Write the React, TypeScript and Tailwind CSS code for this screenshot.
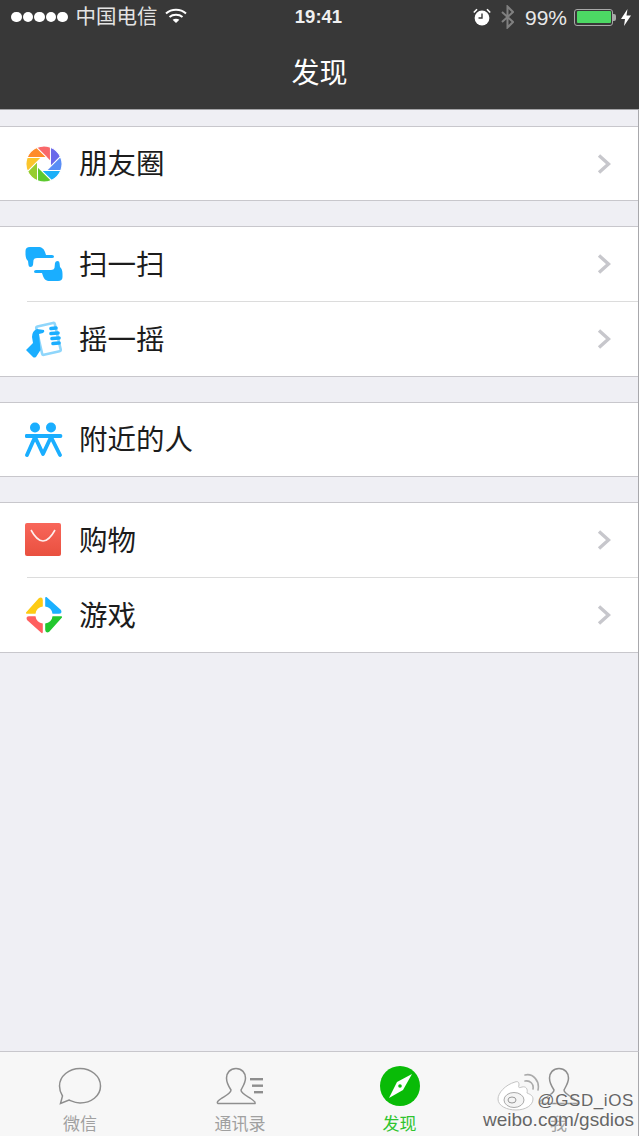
import type { ReactNode } from "react";

const cjk = "font-['Liberation_Sans','Noto_Sans_CJK_SC',sans-serif]";

function Chevron() {
  return (
    <svg width="14" height="20" viewBox="0 0 14 20" fill="none" className="shrink-0">
      <polyline points="2,1.5 11.5,10 2,18.5" stroke="#c7c7cc" strokeWidth="3.4" />
    </svg>
  );
}

function MomentsIcon() {
  const colors = ["#f9686a", "#6a68ea", "#5a8df5", "#1cb0f8", "#5cc92e", "#96cd2e", "#fbc52c", "#ff8b2b"];
  return (
    <svg width="38" height="38" viewBox="-19 -19 38 38">
      {colors.map((c, i) => (
        <path
          key={c}
          transform={`rotate(${i * 45 - 24})`}
          d="M0 -18A18 18 0 0 1 12.73 -12.73L7.04 0.18Z"
          fill={c}
          stroke="#fff"
          strokeWidth="1"
          strokeLinejoin="round"
        />
      ))}
    </svg>
  );
}

function ScanIcon() {
  const d = "M5 1H13C17 1 19 3 20 6L21 9H27Q29 9 29 10.5Q29 12 27 12H12Q9 12 8.5 14L8 19Q7.5 21 5.5 21Q3.5 21 3.5 19L3 15Q0.5 13 0.5 8V5Q0.5 1 5 1Z";
  return (
    <svg width="38" height="36" viewBox="0 0 38 36" fill="#1aaeff">
      <path d={d} />
      <path d={d} transform="rotate(180 19 18)" />
    </svg>
  );
}

function ShakeIcon() {
  return (
    <svg width="38" height="38" viewBox="0 0 38 38">
      <rect x="14" y="4.5" width="19" height="29" rx="1.5" transform="rotate(-13 23 19)" fill="none" stroke="#8fd6fb" strokeWidth="2.6" />
      <g stroke="#1aaeff" strokeWidth="3.6" strokeLinecap="round">
        <line x1="26" y1="8.5" x2="31" y2="8" />
        <line x1="26" y1="13.5" x2="33" y2="13" />
        <line x1="27" y1="18.5" x2="34" y2="18" />
        <line x1="28" y1="23.5" x2="34" y2="23" />
      </g>
      <path d="M1 30L8 23L7 17Q7 11 12 9L19 10Q20 12 18 13L14 14L15.5 30L11 37Q9 38 8 37Z" fill="#1aaeff" />
    </svg>
  );
}

function NearbyIcon() {
  return (
    <svg width="38" height="38" viewBox="0 0 38 38" fill="none">
      <circle cx="10" cy="6.5" r="5" fill="#1aaeff" />
      <circle cx="26" cy="6.5" r="5" fill="#1aaeff" />
      <g stroke="#1aaeff" strokeWidth="3.8" strokeLinecap="round" strokeLinejoin="round">
        <line x1="1.5" y1="15" x2="35.5" y2="15" />
        <polyline points="2,34 10,16 18,33 26,16 35,34" />
      </g>
    </svg>
  );
}

function ShopIcon() {
  return (
    <svg width="36" height="33" viewBox="0 0 36 33" className="mb-[2px]">
      <defs>
        <linearGradient id="shop" x1="0" y1="0" x2="0" y2="1">
          <stop offset="0" stopColor="#f8665a" />
          <stop offset="1" stopColor="#e9503f" />
        </linearGradient>
      </defs>
      <rect width="36" height="33" rx="2" fill="url(#shop)" />
      <path d="M6 7Q18 29 30 7" fill="none" stroke="#fff" strokeWidth="1.6" opacity="0.9" />
    </svg>
  );
}

function GameIcon() {
  const blades = [
    { color: "#fdcb13", angle: 0 },
    { color: "#1ab0ff", angle: 90 },
    { color: "#22c72e", angle: 180 },
    { color: "#ff5f5f", angle: 270 },
  ];
  return (
    <svg width="38" height="38" viewBox="-19 -19 38 38">
      {blades.map((b) => (
        <path
          key={b.color}
          transform={`rotate(${b.angle})`}
          d="M-18 -2.5L-5 -17Q-1.5 -18.5 -1.2 -15V-8.5A8 8 0 0 0 -8.5 -1.2H-17Q-18.5 -1.2 -18 -2.5Z"
          fill={b.color}
        />
      ))}
    </svg>
  );
}

function ChatIcon() {
  return (
    <svg width="44" height="38" viewBox="0 0 44 38" fill="none">
      <path
        d="M22 1.5C33 1.5 42.5 9 42.5 19C42.5 29 33 36 22 36C17 36 13.5 34 11 33L2.5 36.5L4.5 29C2.5 26 1.5 22.5 1.5 19C1.5 9 11 1.5 22 1.5Z"
        stroke="#8e8e8e"
        strokeWidth="1.5"
      />
    </svg>
  );
}

function ContactsIcon() {
  return (
    <svg width="48" height="38" viewBox="0 0 48 38" fill="none">
      <path
        d="M20 1.5C26 1.5 29.5 6 29.5 11C29.5 16 26.5 20 25 23C25 26 29 28 34 31C37 33 40 35 39 36.5H2C0 35 3 33 6 31C11 28 15 26 15 23C13 20 10.5 16 10.5 11C10.5 6 14 1.5 20 1.5Z"
        stroke="#8e8e8e"
        strokeWidth="1.5"
      />
      <g fill="#8e8e8e">
        <rect x="34" y="11" width="13" height="2.4" />
        <rect x="36" y="17.5" width="11" height="2.4" />
        <rect x="38" y="24" width="9" height="2.4" />
      </g>
    </svg>
  );
}

function DiscoverIcon() {
  return (
    <svg width="40" height="40" viewBox="0 0 40 40">
      <circle cx="20" cy="20" r="20" fill="#09bb07" />
      <path d="M32 8L23 24L9 32L17 16Z" fill="#fff" />
      <circle cx="20" cy="20" r="1.8" fill="#09bb07" />
    </svg>
  );
}

function MeIcon() {
  return (
    <svg width="44" height="38" viewBox="0 0 44 38" fill="none">
      <path
        d="M22 1.5C28 1.5 31.5 6 31.5 11C31.5 16 28.5 20 27 23C27 26 31 28 36 31C39 33 42 35 41 36.5H3C1 35 5 33 8 31C13 28 17 26 17 23C15 20 12.5 16 12.5 11C12.5 6 16 1.5 22 1.5Z"
        stroke="#8e8e8e"
        strokeWidth="1.5"
      />
    </svg>
  );
}

function WeiboLogo() {
  return (
    <svg width="44" height="38" viewBox="0 0 44 38" fill="none">
      <path d="M18 9C8 12 1 20 1 26C1 33 10 37 19 37C29 37 36 32 36 26C36 22 32 21 30 20C31 16 29 13 25 14C22 15 21 15 22 12C22 9 21 8 18 9Z" fill="#fff" stroke="#c4c4c4" strokeWidth="1" />
      <ellipse cx="17" cy="27" rx="10" ry="7.5" fill="#f4f4f4" stroke="#aaa" strokeWidth="1" />
      <ellipse cx="15" cy="27" rx="4" ry="3" stroke="#999" strokeWidth="1" />
      <path d="M28 8C33 7 37 11 36 16M28 2C36 0 43 8 41 17" stroke="#aaa" strokeWidth="1.6" strokeLinecap="round" />
    </svg>
  );
}

function Row({ icon, label, chevron = true, height }: { icon: ReactNode; label: string; chevron?: boolean; height: string }) {
  return (
    <div className={`flex items-center pl-[25px] pr-[27px] ${height}`}>
      <div className="flex w-[38px] shrink-0 items-center justify-start">{icon}</div>
      <span className={`ml-[16px] flex-1 pt-[2px] text-[28.5px] leading-none text-[#1c1c1c] ${cjk}`}>{label}</span>
      {chevron && <Chevron />}
    </div>
  );
}

function Section({ className, children }: { className: string; children: ReactNode }) {
  return <div className={`border-y border-[#c8c7cc] bg-white ${className}`}>{children}</div>;
}

function Divider() {
  return <div className="ml-[27px] h-px bg-[#dcdcdc]" />;
}

function Tab({ icon, label, active = false }: { icon: ReactNode; label: string; active?: boolean }) {
  return (
    <div className="flex h-full flex-col items-center pt-[14px]">
      <div className="flex h-[40px] items-center justify-center">{icon}</div>
      <span className={`mt-[9px] text-[17px] leading-[20px] ${cjk} ${active ? "text-[#2fc42f]" : "text-[#a0a0a0]"}`}>{label}</span>
    </div>
  );
}

export default function App() {
  return (
    <div className={`flex h-[1136px] w-[639px] flex-col overflow-hidden bg-[#efeff4] ${cjk}`}>
      <header className="h-[110px] shrink-0 border-b border-[#a3a3a6] bg-[#383838] text-white">
        <div className="grid h-[34px] grid-cols-3 items-center">
          <div className="flex items-center pl-[11px]">
            <div className="flex gap-[1px]">
              {[0, 1, 2, 3, 4].map((i) => (
                <span key={i} className="h-[10.5px] w-[10.5px] rounded-full bg-white" />
              ))}
            </div>
            <span className="ml-[8px] text-[20.5px] leading-none text-[#e4e4e4]">中国电信</span>
            <svg width="22" height="16" viewBox="0 0 22 16" fill="none" stroke="#fff" strokeWidth="2" className="mb-[2px] ml-[7px]">
              <path d="M1 5.5C6.5 0.5 15.5 0.5 21 5.5" />
              <path d="M4.5 9C8 6 14 6 17.5 9" />
              <path d="M11 15L7.6 11.8C9.5 10.3 12.5 10.3 14.4 11.8Z" fill="#fff" stroke="none" />
            </svg>
          </div>
          <div className="pr-[2px] text-center text-[18.5px] font-bold leading-none text-[#f0f0f0]">19:41</div>
          <div className="flex items-center justify-end pr-[8px]">
            <svg width="18" height="18" viewBox="0 0 18 18">
              <circle cx="9" cy="10" r="7.4" fill="#fff" />
              <path d="M9 5.5V10H5.5" fill="none" stroke="#383838" strokeWidth="1.4" />
              <path d="M0.8 4.5L4 1.2M17.2 4.5L14 1.2" stroke="#fff" strokeWidth="1.6" />
            </svg>
            <svg width="13" height="24" viewBox="0 0 13 24" fill="none" stroke="#808080" strokeWidth="2" className="ml-[10px]">
              <path d="M1 7L12 17L6.5 22.5V1.5L12 7L1 17" />
            </svg>
            <span className="ml-[11px] text-[21px] leading-none text-[#e8e8e8]">99%</span>
            <div className="ml-[7px] h-[17px] w-[39px] rounded-[3px] border border-[#a8a8a8] p-[1.5px]">
              <div className="h-full w-full rounded-[1px] bg-[#4cd964]" />
            </div>
            <span className="h-[7px] w-[3px] rounded-r-[2px] bg-[#a8a8a8]" />
            <svg width="10" height="17" viewBox="0 0 10 17" className="ml-[5px]">
              <path d="M6.5 0L0 10H4L3 17L10 6.5H5.5Z" fill="#fff" />
            </svg>
          </div>
        </div>
        <div className="flex h-[75px] items-center justify-center pt-[4px] text-[28px] leading-none">发现</div>
      </header>

      <main className="flex flex-1 flex-col border-r border-[#a8a8ac] pt-[16px]">
        <Section className="">
          <Row icon={<MomentsIcon />} label="朋友圈" height="h-[73px]" />
        </Section>
        <Section className="mt-[25px]">
          <Row icon={<ScanIcon />} label="扫一扫" height="h-[74px]" />
          <Divider />
          <Row icon={<ShakeIcon />} label="摇一摇" height="h-[74px]" />
        </Section>
        <Section className="mt-[25px]">
          <Row icon={<NearbyIcon />} label="附近的人" chevron={false} height="h-[73px]" />
        </Section>
        <Section className="mt-[25px]">
          <Row icon={<ShopIcon />} label="购物" height="h-[74px]" />
          <Divider />
          <Row icon={<GameIcon />} label="游戏" height="h-[74px]" />
        </Section>
      </main>

      <nav className="relative grid h-[85px] shrink-0 grid-cols-[160px_160px_159px_159px] border-t border-r border-t-[#c8c7cc] border-r-[#a8a8ac] bg-[#f7f7f7]">
        <Tab icon={<ChatIcon />} label="微信" />
        <Tab icon={<ContactsIcon />} label="通讯录" />
        <Tab icon={<DiscoverIcon />} label="发现" active />
        <Tab icon={<MeIcon />} label="我" />
        <div className="absolute left-[497px] top-[21px]">
          <WeiboLogo />
        </div>
        <div className="absolute right-[4px] top-[39px] flex flex-col items-end font-['Liberation_Sans',sans-serif] text-[#666] [text-shadow:0_0_2px_#fff]">
          <span className="text-[17px] leading-[19px] tracking-[0.6px]">@GSD_iOS</span>
          <span className="text-[19px] leading-[20px]">weibo.com/gsdios</span>
        </div>
      </nav>
    </div>
  );
}
